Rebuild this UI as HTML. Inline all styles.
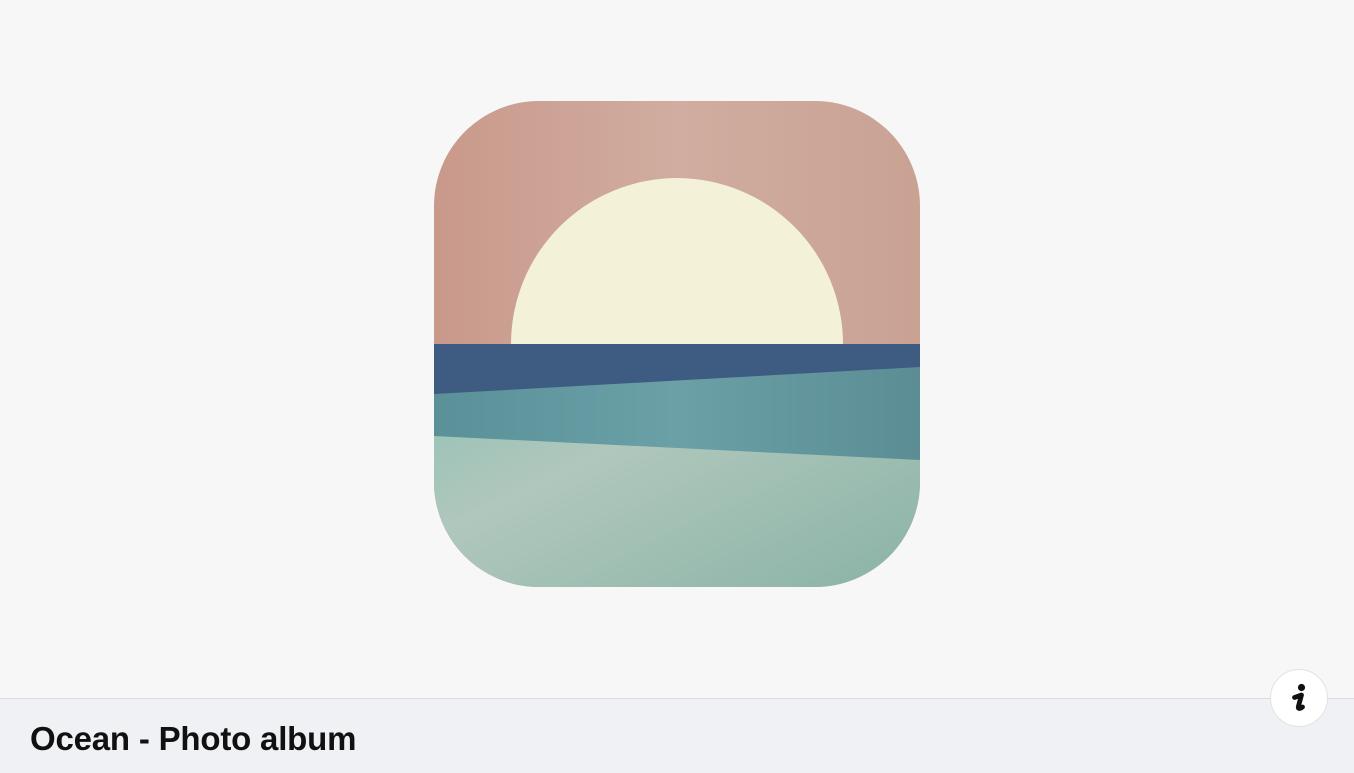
<!DOCTYPE html>
<html><head><meta charset="utf-8"><style>
html,body{margin:0;padding:0;width:1354px;height:772px;overflow:hidden;background:#f7f7f7;font-family:"Liberation Sans",sans-serif}
.icon{position:absolute;left:434px;top:101px}
.footer{position:absolute;left:0;top:698px;width:1354px;height:74px;background:#f0f1f5;border-top:1px solid #dcdcdc}
.title{position:absolute;left:30px;top:720px;font-size:33px;font-weight:bold;color:#111;letter-spacing:-0.2px}
.info{position:absolute;left:1270px;top:669px;width:56px;height:56px;border-radius:50%;background:#fff;border:1px solid #e2e2e2}
</style></head><body>
<svg class="icon" width="486" height="486" viewBox="0 0 486 486">
<defs>
<clipPath id="c"><rect width="486" height="486" rx="105" ry="105"/></clipPath>
<linearGradient id="sky" x1="0" y1="0" x2="1" y2="0"><stop offset="0" stop-color="#c9998b"/><stop offset="0.5" stop-color="#d0ada0"/><stop offset="1" stop-color="#c9a294"/></linearGradient>
<linearGradient id="sea" x1="0" y1="0" x2="1" y2="1"><stop offset="0" stop-color="#8fc0b4"/><stop offset="0.4" stop-color="#b0c7bc"/><stop offset="1" stop-color="#8ab3a6"/></linearGradient>
<linearGradient id="teal" x1="0" y1="0" x2="1" y2="0"><stop offset="0" stop-color="#5a9199"/><stop offset="0.5" stop-color="#6aa0a6"/><stop offset="1" stop-color="#5b8d94"/></linearGradient>
</defs>
<g clip-path="url(#c)">
<rect width="486" height="486" fill="url(#sky)"/>
<path d="M77 243 A166 166 0 0 1 409 243 Z" fill="#f3f2d8"/>
<rect y="243" width="486" height="243" fill="url(#sea)"/>
<polygon points="0,243 486,243 486,359 0,335" fill="url(#teal)"/>
<polygon points="0,243 486,243 486,266 0,293" fill="#3e5b82"/>
</g>
</svg>
<div class="footer"></div>
<div class="title">Ocean - Photo album</div>
<div class="info"><svg width="56" height="56" viewBox="0 0 56 56"><circle cx="30.5" cy="17.5" r="3.6" fill="#111"/><path d="M23.5 27.5 L30.5 25 L27.5 36 Q26.5 39.5 30 38 L31.5 37" fill="none" stroke="#111" stroke-width="4.8" stroke-linecap="round" stroke-linejoin="round"/></svg></div>
</body></html>
